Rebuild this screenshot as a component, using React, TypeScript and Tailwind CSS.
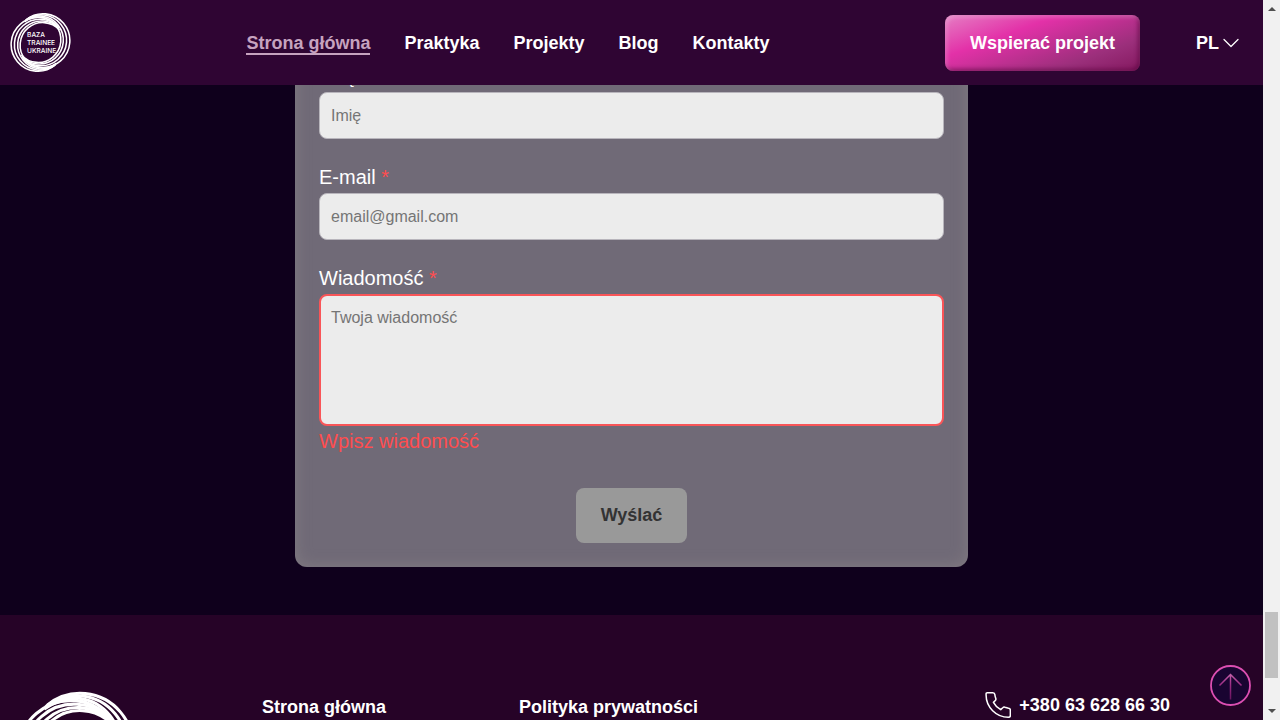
import type { ReactNode } from "react";

const arcs = [
  "M16 8A26 26 0 1 1 13 45.5",
  "M15.5 8.500A24.6 24.6 0 1 1 12.5 44.5",
  "M15 9A23.2 23.2 0 1 1 12 43.5",
  "M14.5 10A21.9 21.9 0 1 1 11.500 42",
];

function Logo({ className, lettering = false }: { className: string; lettering?: boolean }) {
  return (
    <svg viewBox="0.5 1 59 58" className={className} role="img" aria-label="Baza Trainee Ukraine">
      <g fill="none" stroke="#fff" strokeWidth="1.5">
        {arcs.map((d) => (
          <path key={d} d={d} />
        ))}
        <g transform="rotate(180 30 30)">
          {arcs.map((d) => (
            <path key={d} d={d} />
          ))}
        </g>
      </g>
      {lettering && (
        <g fill="#fff" fontFamily="Inter, sans-serif" fontSize="6.4" fontWeight="500">
          <text x="17" y="25">BAZA</text>
          <text x="17" y="32.5">TRAINEE</text>
          <text x="17" y="40">UKRAINE</text>
        </g>
      )}
    </svg>
  );
}

const nav = ["Praktyka", "Projekty", "Blog", "Kontakty"];

function Field({ id, label, children }: { id: string; label: string; children: ReactNode }) {
  return (
    <div className="flex flex-col gap-1">
      <label htmlFor={id} className="text-xl leading-6 text-white">
        {label} <span className="text-[#ff4d4f]">*</span>
      </label>
      {children}
    </div>
  );
}

const inputClass =
  "block h-[47px] w-full rounded-lg border border-[#b8b5bc] bg-[#ececec] px-[11px] text-base text-[#333] outline-none placeholder:text-[#757575]";

function Header() {
  return (
    <header className="relative z-10 flex h-[85px] shrink-0 items-center justify-between bg-[#2f0533] pr-6 pl-[10px] text-lg font-bold text-white">
      <a href="#home">
        <Logo lettering className="size-[61px]" />
      </a>
      <nav className="flex items-center gap-[34px] leading-6">
        <a href="#home" className="border-b-2 border-[#c6a3bf] pt-[2px] leading-5 text-[#c6a3bf]">
          Strona główna
        </a>
        {nav.map((item) => (
          <a key={item} href={`#${item.toLowerCase()}`}>
            {item}
          </a>
        ))}
      </nav>
      <div className="flex items-center gap-14">
        <button
          type="button"
          className="rounded-lg bg-[linear-gradient(160deg,#e57fc4_0%,#e331a8_33%,#9b2f7b_75%,#84195f_100%)] px-[25px] py-[14px] leading-7 shadow-[inset_2px_2px_4px_rgba(255,255,255,0.25),inset_-2px_-2px_4px_rgba(90,5,65,0.65)]"
        >
          Wspierać projekt
        </button>
        <button type="button" className="flex items-center gap-1">
          PL
          <svg viewBox="0 0 16 10" className="h-[10px] w-4" fill="none" stroke="#fff" strokeWidth="1.3" strokeLinecap="round" strokeLinejoin="round">
            <path d="M1 1.5 8 8.5l7-7" />
          </svg>
        </button>
      </div>
    </header>
  );
}

function ContactForm() {
  return (
    <form
      className="mx-auto -mt-[45px] flex w-full max-w-[673px] flex-col rounded-xl bg-[#706a77] p-6 shadow-[inset_0_0_16px_rgba(150,145,145,0.45)]"
      onSubmit={(e) => e.preventDefault()}
    >
      <div className="flex flex-col gap-[26px]">
        <Field id="name" label="Imię">
          <input id="name" type="text" placeholder="Imię" className={inputClass} />
        </Field>
        <Field id="email" label="E-mail">
          <input id="email" type="email" placeholder="email@gmail.com" className={inputClass} />
        </Field>
        <Field id="message" label="Wiadomość">
          <textarea
            id="message"
            placeholder="Twoja wiadomość"
            aria-invalid="true"
            aria-describedby="message-error"
            className="block h-[132px] w-full resize-none rounded-lg border-2 border-[#f95558] bg-[#ececec] px-[10px] py-[10px] text-base text-[#333] outline-none placeholder:text-[#757575]"
          />
          <p id="message-error" className="-mt-[1px] text-xl leading-6 text-[#ff4d4f]">
            Wpisz wiadomość
          </p>
        </Field>
      </div>
      <button
        type="submit"
        disabled
        className="mt-[35px] self-center rounded-lg bg-[#999] px-[25px] py-[14px] text-lg leading-[27px] font-bold text-[#333]"
      >
        Wyślać
      </button>
    </form>
  );
}

function Footer() {
  return (
    <footer className="grid flex-1 grid-cols-[246px_257px_1fr_auto] items-start overflow-hidden bg-[#260327] pt-20 pr-[93px] pl-4 text-lg leading-6 font-bold text-white">
      <Logo className="-mt-[5px] size-[119px]" />
      <a href="#home">Strona główna</a>
      <a href="#privacy">Polityka prywatności</a>
      <a href="tel:+380636286630" className="-mt-[3px] flex items-center gap-2">
        <svg viewBox="0 0 24 24" className="size-[26px]" fill="none" stroke="#fff" strokeWidth="1.4" strokeLinejoin="round">
          <path d="M1 1.8C1 1.1 1.4.7 2 .7h5.2c1 0 1.8.7 1.9 1.7.1 1.2.4 2.3.8 3.4.3.8.1 1.6-.4 2.1L7.8 9.6c1.5 2.9 3.9 5.2 6.7 6.7l1.9-1.8c.5-.5 1.3-.7 2-.4 1.1.4 2.2.7 3.4.9.9.1 1.6.9 1.6 1.8v4.9c0 1-.8 1.6-1.8 1.6C10.3 23.3 1 14 1 2.8z" />
        </svg>
        +380 63 628 66 30
      </a>
    </footer>
  );
}

function ScrollTop() {
  return (
    <button type="button" aria-label="Do góry" className="absolute right-3 bottom-[14px] z-20">
      <svg viewBox="0 0 41 41" className="size-[41px]" fill="none">
        <defs>
          <linearGradient id="arrow" x1="0" y1="8" x2="0" y2="35" gradientUnits="userSpaceOnUse">
            <stop stopColor="#c866ae" />
            <stop offset=".45" stopColor="#9c2a83" />
            <stop offset="1" stopColor="#63135c" />
          </linearGradient>
        </defs>
        <circle cx="20.5" cy="20.5" r="19.5" fill="#190431" stroke="#dc4fb2" strokeWidth="1.8" />
        <path d="M20.5 34.5V9.5M9.5 20.5l11-11 11 11" stroke="url(#arrow)" strokeWidth="1.5" />
      </svg>
    </button>
  );
}

function Scrollbar() {
  return (
    <div aria-hidden="true" className="flex w-[17px] shrink-0 flex-col items-center justify-between bg-[#f1f1f1] py-[7px]">
      <svg viewBox="0 0 8 4" className="h-1 w-2" fill="#505050">
        <path d="M4 0 8 4H0z" />
      </svg>
      <div className="flex w-[13px] flex-1 flex-col justify-end pb-[31px]">
        <div className="h-[66px] bg-[#c1c1c1]" />
      </div>
      <svg viewBox="0 0 8 4" className="h-1 w-2" fill="#505050">
        <path d="M0 0h8L4 4z" />
      </svg>
    </div>
  );
}

export default function App() {
  return (
    <div className="flex h-screen overflow-hidden bg-[#0f001c] font-['Liberation_Sans',Arial,sans-serif]">
      <div className="relative flex min-w-0 flex-1 flex-col overflow-hidden">
        <Header />
        <main className="shrink-0 pb-12">
          <ContactForm />
        </main>
        <Footer />
        <ScrollTop />
      </div>
      <Scrollbar />
    </div>
  );
}
